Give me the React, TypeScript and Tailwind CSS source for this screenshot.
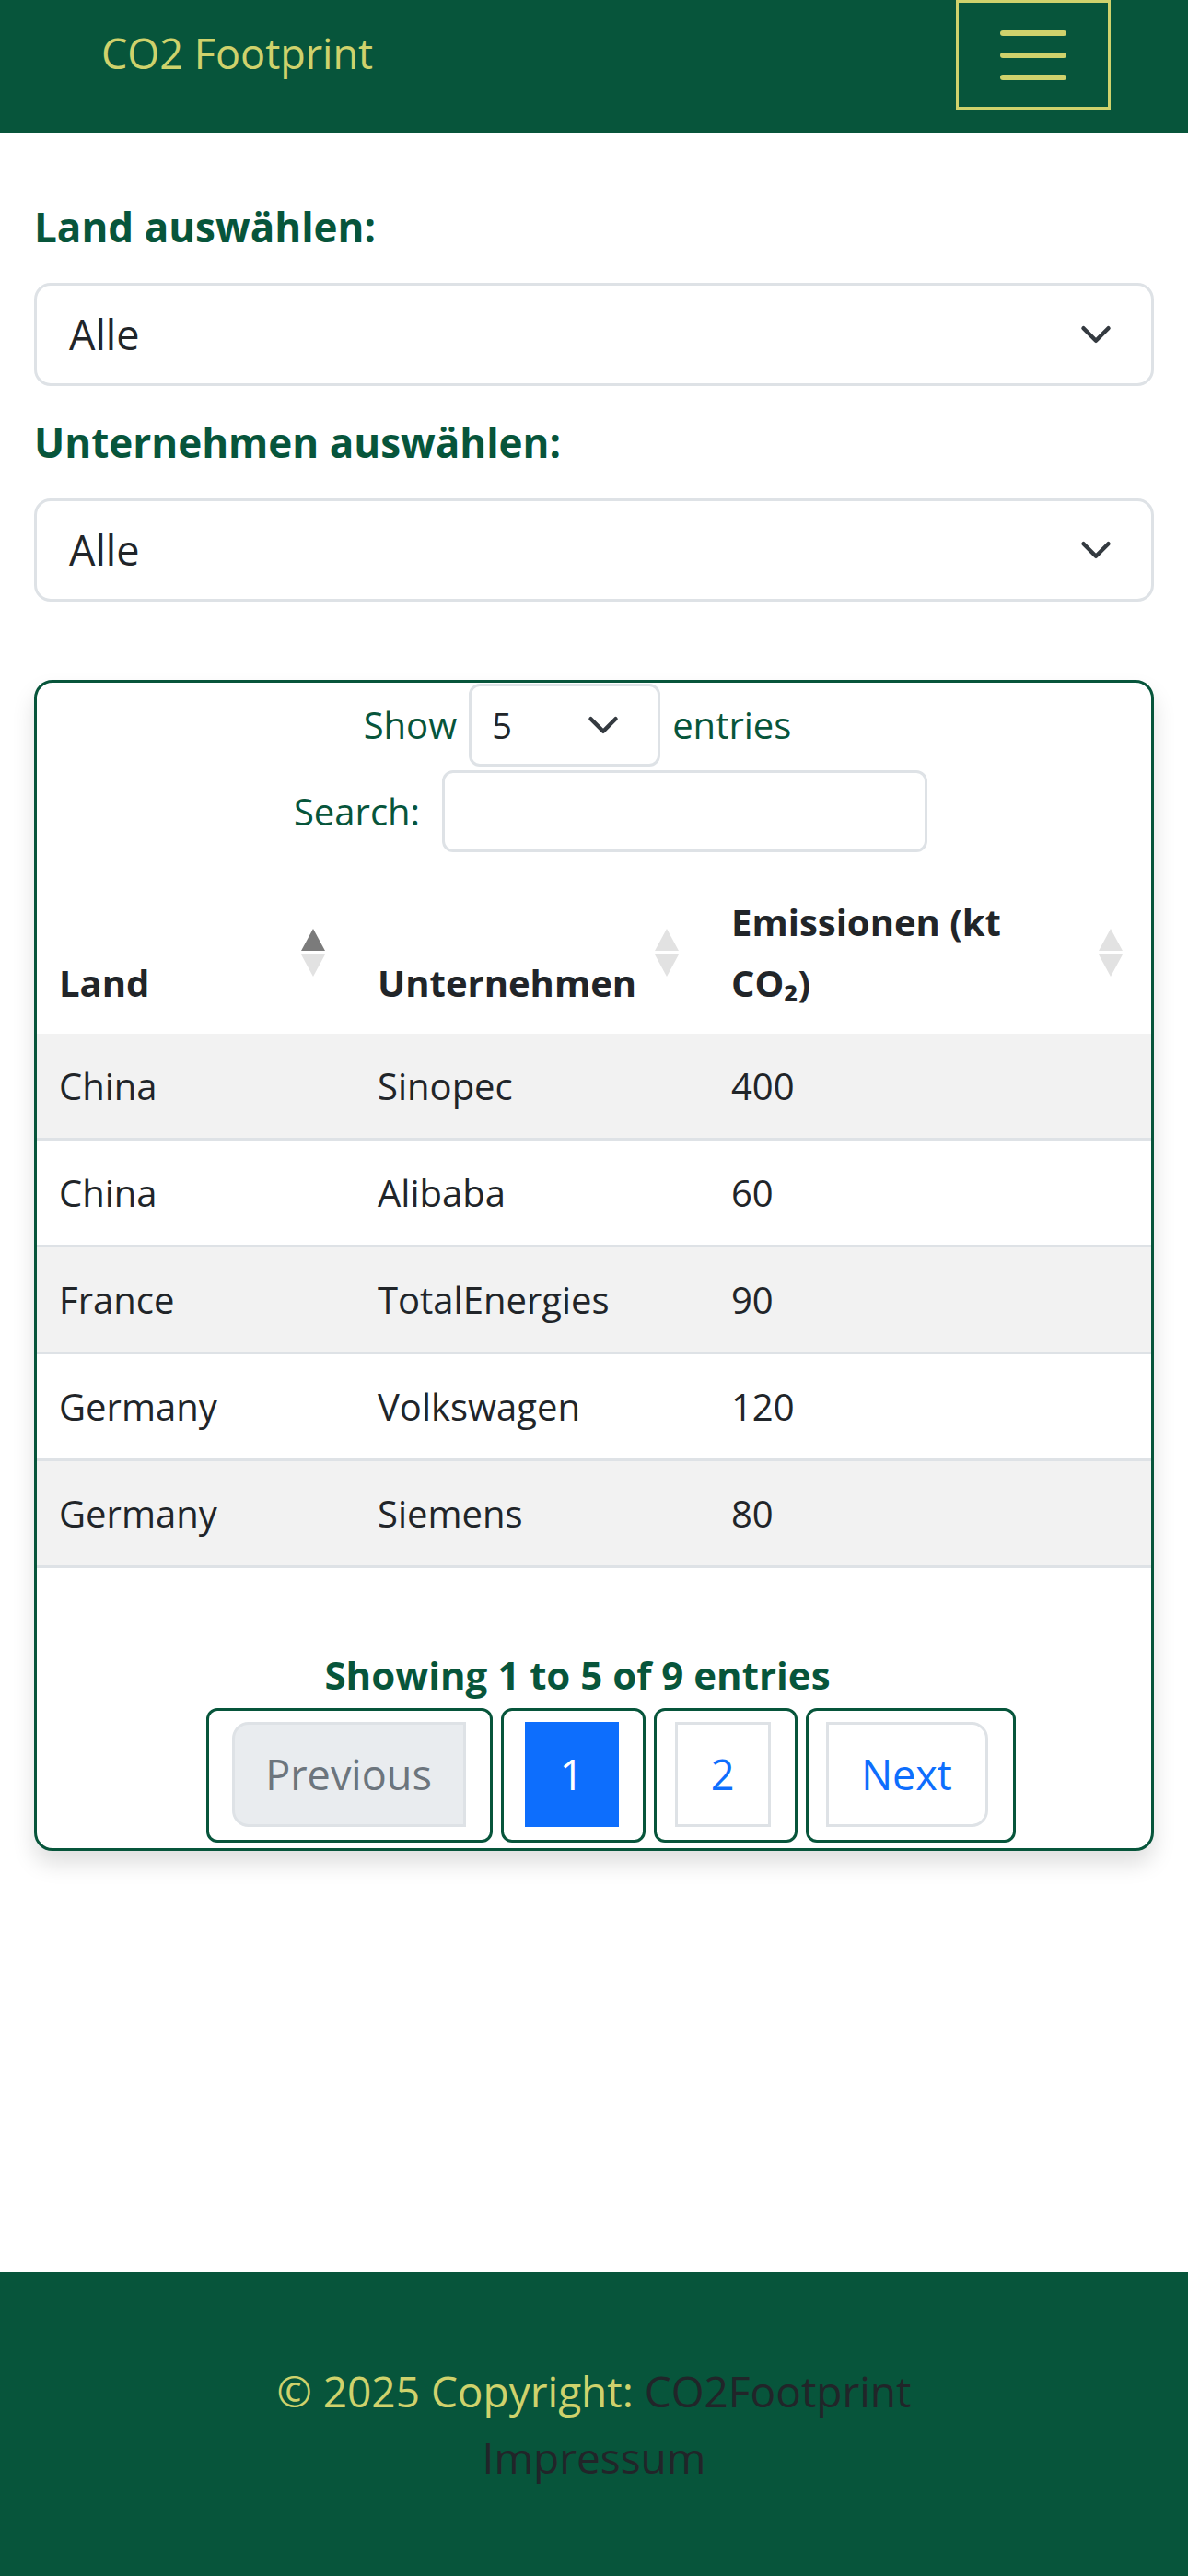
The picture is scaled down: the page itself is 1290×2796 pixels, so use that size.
import React from 'react';

interface Row {
  land: string;
  company: string;
  emissions: string;
}

const rows: Row[] = [
  { land: 'China', company: 'Sinopec', emissions: '400' },
  { land: 'China', company: 'Alibaba', emissions: '60' },
  { land: 'France', company: 'TotalEnergies', emissions: '90' },
  { land: 'Germany', company: 'Volkswagen', emissions: '120' },
  { land: 'Germany', company: 'Siemens', emissions: '80' }
];

function Chevron() {
  return (
    <svg width="36" height="36" viewBox="0 0 16 16" fill="none" className="shrink-0">
      <path d="m2 5 6 6 6-6" stroke="#343a40" strokeWidth="2" strokeLinecap="round" strokeLinejoin="round" />
    </svg>
  );
}

function SortIcon({ active }: { active?: boolean }) {
  return (
    <svg width="26" height="52" viewBox="0 0 26 52" className="absolute right-[31px] top-1/2 -translate-y-1/2">
      <polygon points="13,0 26,24 0,24" fill={active ? '#7b7b7b' : '#e2e2e2'} />
      <polygon points="0,28 26,28 13,52" fill="#e2e2e2" />
    </svg>
  );
}

function SelectBox({ value }: { value: string }) {
  return (
    <div className="h-[112px] border-[3px] border-[#dee2e6] rounded-[18px] bg-white flex items-center justify-between pl-[35px] pr-[42px]">
      <span className="text-[45px] leading-[68px] text-[#212529]">{value}</span>
      <Chevron />
    </div>
  );
}

export default function App() {
  return (
    <div className="min-h-[2796px] flex flex-col bg-white font-['Open_Sans','Noto_Sans',sans-serif]">

      {/* Navbar */}
      <nav className="h-[144px] bg-[#07553b] flex items-start justify-between pl-[110px] pr-[84px]">
        <span className="mt-[24px] text-[45px] leading-[68px] text-[#cfd26c]">CO2 Footprint</span>
        <button className="w-[168px] h-[119px] border-[3px] border-[#cfd26c] flex flex-col items-center justify-center gap-[18px]">
          <span className="block w-[72px] h-[6px] rounded-full bg-[#cfd26c]" />
          <span className="block w-[72px] h-[6px] rounded-full bg-[#cfd26c]" />
          <span className="block w-[72px] h-[6px] rounded-full bg-[#cfd26c]" />
        </button>
      </nav>

      <main className="flex-1 px-[37px] pt-[68px]">
        {/* Filters */}
        <label className="block text-[44px] leading-[68px] font-bold text-[#07553b] mb-[27px]">Land auswählen:</label>
        <SelectBox value="Alle" />
        <label className="block text-[44px] leading-[68px] font-bold text-[#07553b] mt-[27px] mb-[27px]">Unternehmen auswählen:</label>
        <SelectBox value="Alle" />

        {/* Table card */}
        <div className="mt-[85px] border-[3px] border-[#07553b] rounded-[20px] pt-[1px] pb-[6px] bg-white shadow-[0_14px_24px_rgba(0,0,0,0.13)]">
          <div className="flex items-center justify-center gap-[13px] pr-[36px] text-[40px] text-[#07553b]">
            <span>Show</span>
            <div className="w-[208px] h-[90px] border-[3px] border-[#dee2e6] rounded-[12px] flex items-center justify-between pl-[22px] pr-[41px]">
              <span className="text-[38px] text-[#212529]">5</span>
              <Chevron />
            </div>
            <span>entries</span>
          </div>
          <div className="mt-[4px] flex items-center justify-center gap-[24px] pl-[36px] text-[40px] text-[#07553b]">
            <span>Search:</span>
            <div className="w-[527px] h-[89px] border-[3px] border-[#dee2e6] rounded-[12px]" />
          </div>

          {/* Header */}
          <div className="mt-[21px] grid grid-cols-[344px_384px_1fr] text-[40px] leading-[66px] font-bold text-[#212529]">
            <div className="relative flex items-end pl-[24px] py-[22px]">
              Land
              <SortIcon active />
            </div>
            <div className="relative flex items-end pl-[26px] py-[22px]">
              Unternehmen
              <SortIcon />
            </div>
            <div className="relative flex items-end pl-[26px] py-[22px]">
              <span>
                Emissionen (kt
                <br />
                CO₂)
              </span>
              <SortIcon />
            </div>
          </div>

          {/* Rows */}
          {rows.map((r, i) => (
            <div
              key={i}
              className={`grid grid-cols-[344px_384px_1fr] h-[116px] border-b-[3px] border-[#dee2e6] text-[40px] leading-[60px] text-[#212529] ${
                i % 2 === 0 ? 'bg-[#f2f2f2]' : 'bg-white'
              }`}
            >
              <div className="flex items-center pl-[24px]">{r.land}</div>
              <div className="flex items-center pl-[26px]">{r.company}</div>
              <div className="flex items-center pl-[26px]">{r.emissions}</div>
            </div>
          ))}

          {/* Info + pagination */}
          <div className="mt-[84px] pr-[36px] text-center text-[42px] leading-[63px] font-bold text-[#07553b]">
            Showing 1 to 5 of 9 entries
          </div>
          <div className="mt-[5px] pl-[36px] flex justify-center gap-[9px] text-[45px]">
            <div className="border-[3px] border-[#07553b] rounded-[12px] pt-[12px] pb-[14px] pl-[25px] pr-[26px]">
              <div className="w-[254px] h-[114px] flex items-center justify-center bg-[#e9ecef] border-[3px] border-[#dee2e6] rounded-l-[18px] text-[#6c757d]">
                Previous
              </div>
            </div>
            <div className="border-[3px] border-[#07553b] rounded-[12px] pt-[12px] pb-[14px] pl-[23px] pr-[26px]">
              <div className="w-[102px] h-[114px] flex items-center justify-center bg-[#0d6efd] border-[3px] border-[#0d6efd] text-white">
                1
              </div>
            </div>
            <div className="border-[3px] border-[#07553b] rounded-[12px] pt-[12px] pb-[14px] pl-[20px] pr-[26px]">
              <div className="w-[104px] h-[114px] flex items-center justify-center bg-white border-[3px] border-[#dee2e6] text-[#0d6efd]">
                2
              </div>
            </div>
            <div className="border-[3px] border-[#07553b] rounded-[12px] pt-[12px] pb-[14px] pl-[19px] pr-[27px]">
              <div className="w-[176px] h-[114px] flex items-center justify-center bg-white border-[3px] border-[#dee2e6] rounded-r-[18px] text-[#0d6efd]">
                Next
              </div>
            </div>
          </div>
        </div>
      </main>

      {/* Footer */}
      <footer className="h-[330px] bg-[#07553b] flex flex-col items-center justify-center text-[46px] leading-[72px] text-[#cfd26c]">
        <p>
          © 2025 Copyright: <a className="text-[#212529]">CO2Footprint</a>
        </p>
        <a className="text-[#212529]">Impressum</a>
      </footer>
    </div>
  );
}
